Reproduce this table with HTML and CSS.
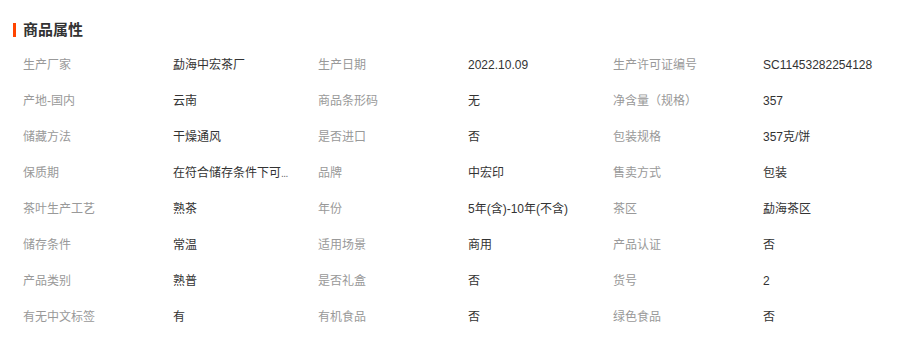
FILE: index.html
```html
<!DOCTYPE html>
<html lang="zh">
<head>
<meta charset="utf-8">
<link rel="stylesheet" href="styles.css">
</head>
<body>
<div class="panel">
  <div class="title"><span class="bar"></span><span class="title-text">商品属性</span></div>
  <div class="grid">
    <div class="k">生产厂家</div><div class="v">勐海中宏茶厂</div>
    <div class="k">生产日期</div><div class="v">2022.10.09</div>
    <div class="k">生产许可证编号</div><div class="v">SC11453282254128</div>

    <div class="k">产地-国内</div><div class="v">云南</div>
    <div class="k">商品条形码</div><div class="v">无</div>
    <div class="k">净含量（规格）</div><div class="v">357</div>

    <div class="k">储藏方法</div><div class="v">干燥通风</div>
    <div class="k">是否进口</div><div class="v">否</div>
    <div class="k">包装规格</div><div class="v">357克/饼</div>

    <div class="k">保质期</div><div class="v">在符合储存条件下可<span class="dots">...</span></div>
    <div class="k">品牌</div><div class="v">中宏印</div>
    <div class="k">售卖方式</div><div class="v">包装</div>

    <div class="k">茶叶生产工艺</div><div class="v">熟茶</div>
    <div class="k">年份</div><div class="v">5年(含)-10年(不含)</div>
    <div class="k">茶区</div><div class="v">勐海茶区</div>

    <div class="k">储存条件</div><div class="v">常温</div>
    <div class="k">适用场景</div><div class="v">商用</div>
    <div class="k">产品认证</div><div class="v">否</div>

    <div class="k">产品类别</div><div class="v">熟普</div>
    <div class="k">是否礼盒</div><div class="v">否</div>
    <div class="k">货号</div><div class="v">2</div>

    <div class="k">有无中文标签</div><div class="v">有</div>
    <div class="k">有机食品</div><div class="v">否</div>
    <div class="k">绿色食品</div><div class="v">否</div>
  </div>
</div>
</body>
</html>
```

FILE: styles.css
```css
html, body {
  margin: 0;
  padding: 0;
  background: #fff;
}
body {
  font-family: "Liberation Sans", "Noto Sans CJK SC", sans-serif;
  font-size: 12px;
  color: #333;
}
.panel {
  padding: 20px 0 0 13px;
}
.title {
  display: flex;
  align-items: center;
  height: 20px;
}
.bar {
  width: 3px;
  height: 14px;
  background: #ff4400;
  margin-right: 7px;
}
.title-text {
  font-size: 15px;
  font-weight: bold;
  color: #333;
  line-height: 20px;
}
.grid {
  display: grid;
  grid-template-columns: 150px 145px 150px 145px 150px 145px;
  grid-auto-rows: 36px;
  padding-left: 10px;
  margin-top: 7px;
}
.k, .v {
  white-space: nowrap;
  line-height: 36px;
}
.k {
  color: #999;
}
.v {
  color: #333;
}
.dots {
  font-size: 10px;
  color: #666;
  letter-spacing: -0.5px;
}
```
